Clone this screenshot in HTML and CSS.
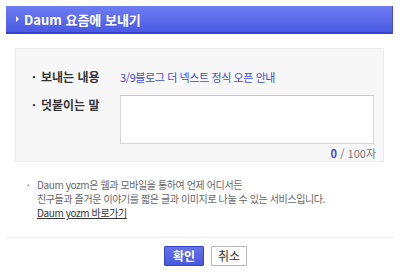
FILE: index.html
```html
<!DOCTYPE html>
<html lang="ko">
<head>
<meta charset="utf-8">
<link rel="stylesheet" href="styles.css">
</head>
<body>
<div class="header"><span class="arrow"></span><span class="title">Daum 요즘에 보내기</span></div>
<div class="panel">
  <div class="row">
    <div class="label"><span class="dot">·</span>보내는 내용</div>
    <div class="value">3/9블로그 더 넥스트 정식 오픈 안내</div>
  </div>
  <div class="row row2">
    <div class="label"><span class="dot">·</span>덧붙이는 말</div>
    <textarea class="memo"></textarea>
  </div>
  <div class="counter"><b>0</b> / 100자</div>
</div>
<div class="info">
  <span class="dot2">·</span>
  <div class="info-text">
    <p>Daum yozm은 웹과 모바일을 통하여 언제 어디서든</p>
    <p>친구들과 즐거운 이야기를 짧은 글과 이미지로 나눌 수 있는 서비스입니다.</p>
    <p><a href="#">Daum yozm 바로가기</a></p>
  </div>
</div>
<div class="sep"></div>
<div class="buttons">
  <button class="btn ok">확인</button>
  <button class="btn cancel">취소</button>
</div>
</body>
</html>
```
FILE: styles.css
```css
html, body { background: #fff; }
body {
  margin: 0;
  padding: 6px 7px 0 6px;
  font-family: "Noto Sans CJK KR", "Noto Sans", sans-serif;
  font-size: 12px;
  color: #333;
}
.header {
  height: 28px;
  box-sizing: border-box;
  background: linear-gradient(#6f7df2, #4a5ae2);
  border-bottom: 2px solid #3443d2;
  border-right: 1px solid #4050d8;
  display: flex;
  align-items: center;
  padding-left: 10px;
  color: #fff;
  font-weight: bold;
}
.arrow {
  width: 0; height: 0;
  border-left: 3px solid #fff;
  border-top: 3px solid transparent;
  border-bottom: 3px solid transparent;
  margin-right: 5px;
}
.title { line-height: 15px; font-size: 13px; letter-spacing: 0; }
.panel {
  margin: 14px 9px 0 9px;
  height: 114px;
  box-sizing: border-box;
  background: #f7f7f7;
  border: 1px solid #ececec;
  padding: 21px 7px 0 16px;
}
.row { display: flex; align-items: flex-start; }
.row2 { margin-top: 11px; }
.label {
  width: 88px;
  line-height: 14px;
  font-weight: bold;
  color: #333;
  font-size: 12px;
}
.row2 .label { padding-top: 3px; }
.dot { display: inline-block; width: 9px; font-weight: bold; }
.value {
  line-height: 14px;
  color: #3d4fd0;
  font-size: 11px;
  letter-spacing: -0.4px;
}
.memo {
  width: 254px;
  height: 49px;
  box-sizing: border-box;
  margin: 0;
  border: 1px solid #d6d6d6;
  border-top-color: #c8c8c8;
  background: #fff;
  resize: none;
  padding: 0;
}
.counter {
  margin-top: 2px;
  text-align: right;
  line-height: 14px;
  font-size: 11px;
  color: #777;
}
.counter b { color: #3a4bd0; }
.info {
  display: flex;
  margin: 16px 0 0 21px;
  font-size: 10px;
  color: #666;
}
.dot2 { width: 10px; line-height: 14px; }
.info-text p { margin: 0; line-height: 14px; letter-spacing: -0.4px; }
.info-text a { color: #333; text-decoration: underline; }
.sep {
  margin-top: 17px;
  height: 1px;
  background: #eeeeee;
}
.buttons {
  display: flex;
  justify-content: center;
  gap: 7px;
  margin-top: 8px;
  padding-left: 12px;
}
.btn {
  height: 20px;
  box-sizing: border-box;
  margin: 0;
  padding: 0;
  font-family: "Noto Sans CJK KR", sans-serif;
  font-size: 12px;
  line-height: 16px;
  border-radius: 1px;
}
.ok {
  width: 40px;
  background: linear-gradient(#6574ec, #4657dc);
  border: 1px solid #3445cc;
  color: #fff;
  font-weight: bold;
}
.cancel {
  width: 36px;
  background: #fff;
  border: 1px solid #b8b8b8;
  color: #333;
}
```
